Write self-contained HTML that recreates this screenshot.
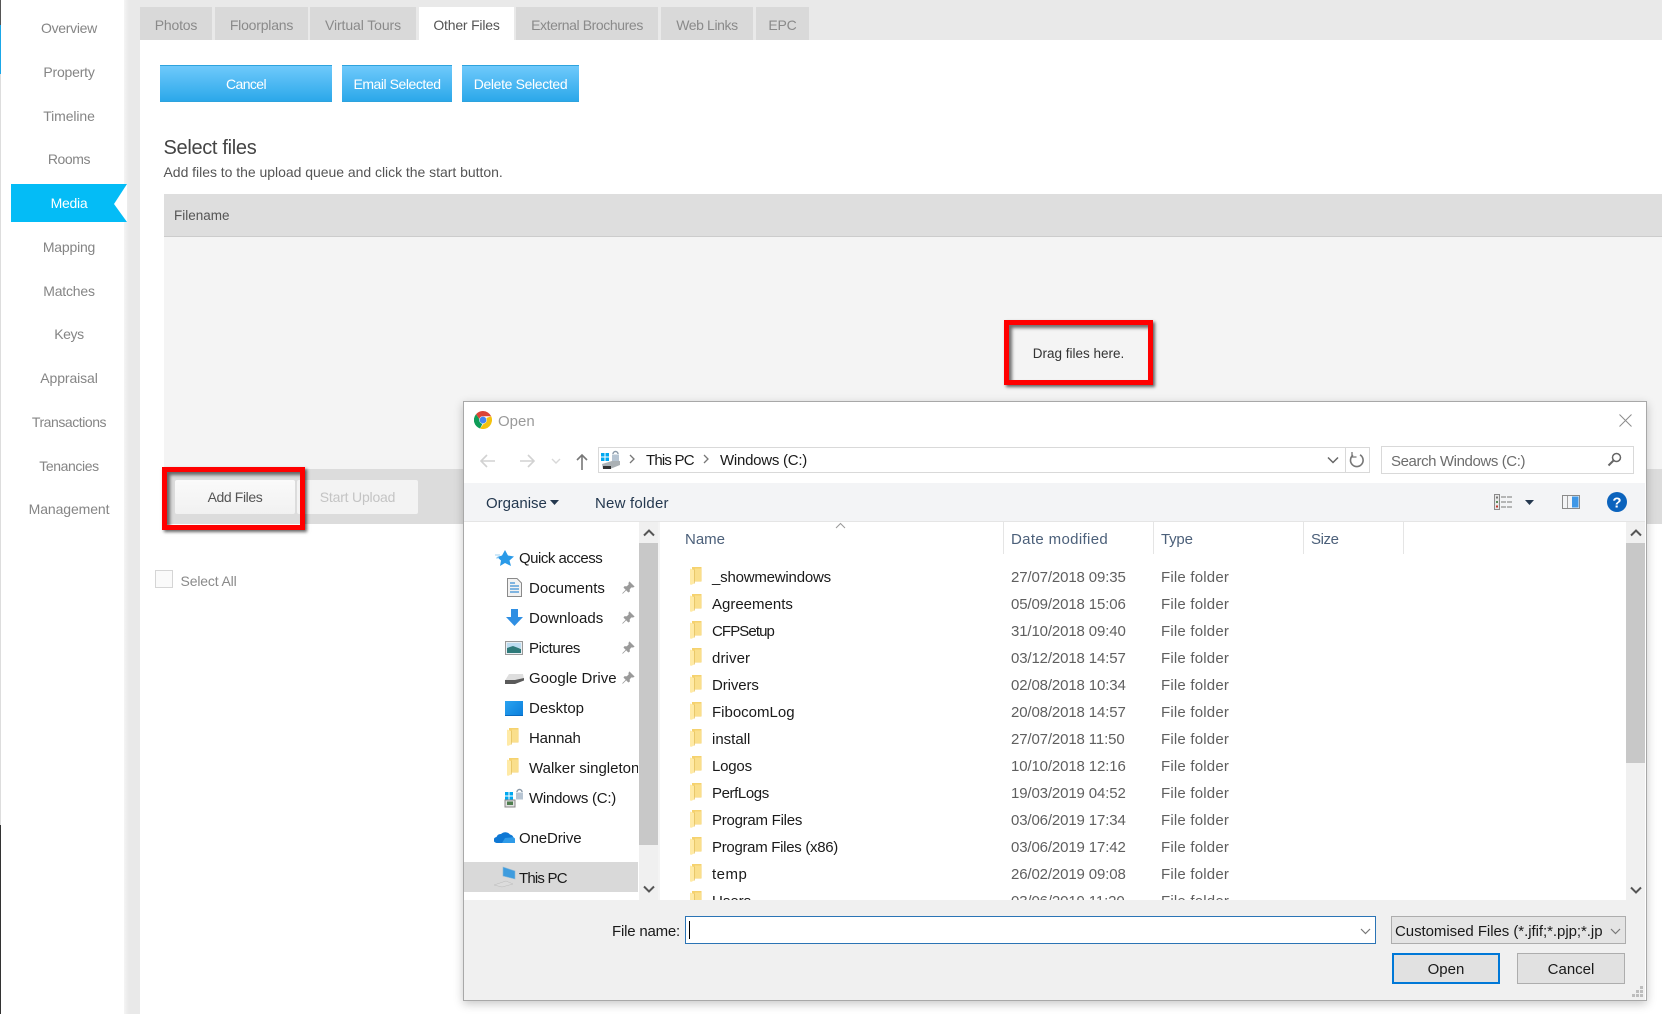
<!DOCTYPE html>
<html><head><meta charset="utf-8"><title>Open</title>
<style>
html,body{margin:0;padding:0;width:1662px;height:1014px;overflow:hidden;background:#fff}
body{position:relative;font-family:"Liberation Sans",sans-serif}
div,svg{position:absolute}
.t{white-space:nowrap;line-height:20px;height:20px}
.n{left:0;width:138px;text-align:center;font-size:14px;color:#858585;letter-spacing:-.2px}
.tab{top:7px;height:33px;background:#d9d9d9;color:#8a8a8a;font-size:14px;line-height:37px;text-align:center;white-space:nowrap;letter-spacing:-.2px}
.btn{top:65px;height:35px;border:solid #2ea3dd;border-width:1px 0;background:linear-gradient(#6fc9fb,#2ba8ea);color:#fff;font-size:14px;line-height:37px;text-align:center;white-space:nowrap;letter-spacing:-.4px}
.red{border:5px solid #f00;box-sizing:border-box;box-shadow:2px 2px 3px rgba(0,0,0,.6),inset 3px 3px 3px rgba(0,0,0,.55)}
.d{font-size:15px;color:#1a1a1a;margin-top:1px}
.h{font-size:15px;color:#4c607a;margin-top:1px}
.g{font-size:15px;color:#5f5f5f;margin-top:1px}
.dt{letter-spacing:-.13px}
.ff{letter-spacing:.2px}
.sep{width:1px;top:522px;height:32px;background:#e5e5e5}
</style></head><body>
<svg width="0" height="0" style="left:0;top:0"><defs>
<symbol id="f" viewBox="0 0 12 18"><path d="M2 0H11.5V14.5H2Z" fill="#f5d26e"/><path d="M5 1.5H11V14H5Z" fill="#fadf8c"/><path d="M4.3 3V16.5" stroke="#e6c569" stroke-width="1"/><path d="M0 1.5L4 3V16.6L.8 18L0 17Z" fill="#ffeaa6"/></symbol>
<symbol id="p" viewBox="0 0 14 14"><path d="M8.5 1 L13 5.5 L11.8 6.2 L10.6 5.8 L8.4 8 L8.4 10.4 L7.4 11 L3 6.6 L3.6 5.6 L6 5.6 L8.2 3.4 L7.8 2.2Z M5 9 L1.5 12.5" fill="#9a9a9a" stroke="#9a9a9a" stroke-width=".8"/></symbol>
</defs></svg>

<!-- left rail -->
<div style="left:0;top:0;width:1px;height:25px;background:#555"></div>
<div style="left:0;top:25px;width:1px;height:49px;background:#1aa7e8"></div>
<div style="left:0;top:74px;width:1px;height:751px;background:#ddd"></div>
<div style="left:0;top:825px;width:1px;height:189px;background:#333"></div>

<!-- gutter -->
<div style="left:124px;top:0;width:16px;height:1014px;background:linear-gradient(90deg,#f4f4f4,#e9e9e9 5px)"></div>
<div style="left:140px;top:0;width:1522px;height:40px;background:#e9e9e9"></div>

<!-- nav -->
<div class="t n" style="top:18px;letter-spacing:-.3px">Overview</div>
<div class="t n" style="top:62px">Property</div>
<div class="t n" style="top:106px;letter-spacing:-.1px">Timeline</div>
<div class="t n" style="top:149px;letter-spacing:-.4px">Rooms</div>
<div style="left:11px;top:184px;width:116px;height:38px;background:#04bcf6"></div>
<svg style="left:113px;top:184px" width="14" height="38"><path d="M14 0 L1 20 L14 38Z" fill="#fff"/></svg>
<div class="t n" style="top:193px;color:#fff;letter-spacing:-.3px">Media</div>
<div class="t n" style="top:237px">Mapping</div>
<div class="t n" style="top:281px">Matches</div>
<div class="t n" style="top:324px;letter-spacing:-.4px">Keys</div>
<div class="t n" style="top:368px;letter-spacing:-.1px">Appraisal</div>
<div class="t n" style="top:412px;letter-spacing:-.45px">Transactions</div>
<div class="t n" style="top:456px;letter-spacing:-.4px">Tenancies</div>
<div class="t n" style="top:499px;letter-spacing:-.1px">Management</div>

<!-- tabs -->
<div class="tab" style="left:140px;width:72px">Photos</div>
<div class="tab" style="left:215px;width:93px">Floorplans</div>
<div class="tab" style="left:310px;width:106px;letter-spacing:-.1px">Virtual Tours</div>
<div class="tab" style="left:419px;width:95px;background:#fff;color:#555">Other Files</div>
<div class="tab" style="left:516px;width:142px;letter-spacing:-.4px">External Brochures</div>
<div class="tab" style="left:661px;width:92px;letter-spacing:-.4px">Web Links</div>
<div class="tab" style="left:756px;width:53px">EPC</div>

<!-- buttons -->
<div class="btn" style="left:160px;width:172px;letter-spacing:-.6px">Cancel</div>
<div class="btn" style="left:342px;width:110px;letter-spacing:-.45px">Email Selected</div>
<div class="btn" style="left:462px;width:117px;letter-spacing:-.35px">Delete Selected</div>

<div class="t" style="left:163.5px;top:137px;font-size:20px;line-height:22px;color:#444;letter-spacing:-.32px">Select files</div>
<div class="t" style="left:163.5px;top:162px;font-size:14px;color:#555;letter-spacing:-.03px">Add files to the upload queue and click the start button.</div>

<!-- uploader -->
<div style="left:164px;top:194px;width:1498px;height:42px;background:#dedede;border-bottom:1px solid #ccc"></div>
<div class="t" style="left:174px;top:206px;font-size:13.5px;color:#555">Filename</div>
<div style="left:164px;top:237px;width:1498px;height:232px;background:#f4f4f4"></div>
<div style="left:164px;top:469px;width:1498px;height:55px;background:#dcdcdc"></div>
<div class="t" style="left:1004px;top:344px;width:149px;text-align:center;font-size:13.5px;color:#333">Drag files here.</div>
<div class="red" style="left:1004px;top:320px;width:149px;height:65px"></div>

<div style="left:175px;top:480px;width:120px;height:34px;background:linear-gradient(#fafafa,#f1f1f1);border-radius:2px"></div>
<div class="t" style="left:175px;top:487px;width:120px;text-align:center;font-size:14px;color:#555;letter-spacing:-.4px">Add Files</div>
<div style="left:297px;top:480px;width:121px;height:34px;background:#f3f3f3;border-radius:2px"></div>
<div class="t" style="left:297px;top:487px;width:121px;text-align:center;font-size:14px;color:#c4c4c4;letter-spacing:-.2px">Start Upload</div>
<div class="red" style="left:162px;top:467px;width:143px;height:63px"></div>

<div style="left:155px;top:570px;width:16px;height:16px;border:1px solid #d5d5d5;background:#fafafa"></div>
<div class="t" style="left:180.5px;top:571px;font-size:14px;color:#8a8a8a;letter-spacing:-.15px">Select All</div>

<!-- dialog -->
<div style="left:463px;top:401px;width:1182px;height:598px;background:#fff;border:1px solid #a8a8a8;box-sizing:content-box;box-shadow:0 3px 9px rgba(0,0,0,.22)"></div>

<!-- title -->
<svg style="left:474px;top:411px" width="18" height="18" viewBox="0 0 18 18"><path d="M9 0A9 9 0 0 1 17.2 5.3H9A3.8 3.8 0 0 0 5.3 8L2 3.2A9 9 0 0 1 9 0Z" fill="#db4437"/><path d="M2 3.2L5.3 8A3.8 3.8 0 0 0 8.5 12.8L6 17.5A9 9 0 0 1 2 3.2Z" fill="#0f9d58"/><path d="M17.2 5.3A9 9 0 0 1 6 17.5L9.6 12.7A3.8 3.8 0 0 0 12.3 7L17.2 5.3Z" fill="#f4c20d"/><circle cx="9" cy="9" r="3.4" fill="#4285f4"/></svg>
<div class="t" style="left:498px;top:412px;font-size:15px;color:#9a9a9a">Open</div>
<svg style="left:1619px;top:414px" width="13" height="13"><path d="M.5 .5L12.5 12.5M12.5 .5L.5 12.5" stroke="#8c8c8c" fill="none"/></svg>

<!-- nav row -->
<svg style="left:479px;top:453px" width="115" height="18" fill="none">
<path d="M16 8H2M8 2L2 8L8 14" stroke="#d2d2d2" stroke-width="1.6"/>
<path d="M41 8H55M49 2L55 8L49 14" stroke="#d2d2d2" stroke-width="1.6"/>
<path d="M73 6L77 10L81 6" stroke="#d8d8d8" stroke-width="1.4"/>
<path d="M103 17V2M98 7L103 2L108 7" stroke="#777" stroke-width="1.6"/>
</svg>
<div style="left:598px;top:447px;width:770px;height:24px;border:1px solid #d9d9d9"></div>
<div style="left:1345px;top:447px;width:1px;height:25px;background:#d9d9d9"></div>
<svg style="left:600px;top:449px" width="22" height="22"><rect x="1" y="4" width="3.5" height="3.5" fill="#00a8f0"/><rect x="5.5" y="4" width="3.5" height="3.5" fill="#00a8f0"/><rect x="1" y="8.5" width="3.5" height="3.5" fill="#00a8f0"/><rect x="5.5" y="8.5" width="3.5" height="3.5" fill="#00a8f0"/><path d="M13 5a2.5 2.5 0 0 1 5 0" stroke="#8a99a8" fill="none" stroke-width="1.4"/><rect x="12" y="5.5" width="7" height="7" fill="#b6c4d2"/><path d="M2 15L12 12H20V16L10 20H3Z" fill="#aab0b4"/><path d="M3 17L11 17V20H3Z" fill="#333"/></svg>
<svg style="left:628px;top:452px" width="120" height="14" fill="none" stroke="#777" stroke-width="1.3"><path d="M2 3L6 7L2 11"/><path d="M76 3L80 7L76 11"/></svg>
<div class="t d" style="left:646px;top:450px;letter-spacing:-.8px">This PC</div>
<div class="t d" style="left:720px;top:450px;letter-spacing:-.25px">Windows (C:)</div>
<svg style="left:1327px;top:456px" width="12" height="8" fill="none"><path d="M1 1.5L6 6.5L11 1.5" stroke="#666" stroke-width="1.5"/></svg>
<svg style="left:1349px;top:452px" width="16" height="16" fill="none"><path d="M4 3.2A6.3 6.3 0 1 0 11 2.8" stroke="#777" stroke-width="1.6"/><path d="M3 0V5H7.5" stroke="#777" stroke-width="1.3"/></svg>
<div style="left:1381px;top:446px;width:251px;height:26px;border:1px solid #d9d9d9"></div>
<div class="t g" style="left:1391px;top:451px;color:#6d6d6d;letter-spacing:-.4px">Search Windows (C:)</div>
<svg style="left:1607px;top:452px" width="15" height="15" fill="none" stroke="#666"><circle cx="9.5" cy="5.5" r="4" stroke-width="1.5"/><path d="M6.5 8.5L1.5 13.5" stroke-width="2"/></svg>

<!-- toolbar -->
<div style="left:464px;top:483px;width:1181px;height:38px;background:#f3f4f6;border-bottom:1px solid #e5e5e5"></div>
<div class="t h" style="left:486px;top:493px;color:#24384f">Organise</div>
<svg style="left:550px;top:500px" width="9" height="5"><path d="M0 0H9L4.5 5Z" fill="#24384f"/></svg>
<div class="t h" style="left:595px;top:493px;color:#24384f;letter-spacing:.2px">New folder</div>
<svg style="left:1494px;top:494px" width="18" height="16" fill="none"><rect x=".5" y=".5" width="5" height="15" fill="#e8e8e8" stroke="#8a8a8a"/><rect x="2" y="2.5" width="2" height="2" fill="#777"/><rect x="2" y="7" width="2" height="2" fill="#5a8a5a"/><rect x="2" y="11.5" width="2" height="2" fill="#c0392b"/><path d="M7 3H18M7 8H18M7 13H18" stroke="#777" stroke-dasharray="5 1"/></svg>
<svg style="left:1525px;top:500px" width="9" height="5"><path d="M0 0H9L4.5 5Z" fill="#24384f"/></svg>
<svg style="left:1562px;top:495px" width="18" height="14"><rect x=".5" y=".5" width="17" height="13" fill="#f3f4f6" stroke="#8a8a8a"/><rect x="10" y="1.5" width="6.5" height="11" fill="#3f97e6"/><rect x="5" y="1" width="1" height="12" fill="#a0a0a0"/></svg>
<svg style="left:1607px;top:492px" width="20" height="20"><circle cx="10" cy="10" r="10" fill="#0b63bd"/><text x="10" y="15.5" text-anchor="middle" font-family="Liberation Sans" font-weight="bold" font-size="15" fill="#fff">?</text></svg>

<!-- nav pane -->
<div style="left:464px;top:862px;width:174px;height:30px;background:#d9d9d9"></div>
<div style="left:639px;top:522px;width:19px;height:378px;background:#f0f0f0"></div>
<div style="left:639px;top:543px;width:19px;height:302px;background:#c8c8c8"></div>
<svg style="left:643px;top:529px" width="12" height="8" fill="none"><path d="M1 6.5L6 1.5L11 6.5" stroke="#555" stroke-width="2"/></svg>
<svg style="left:643px;top:885px" width="12" height="8" fill="none"><path d="M1 1.5L6 6.5L11 1.5" stroke="#555" stroke-width="2"/></svg>
<div style="left:658px;top:522px;width:2px;height:378px;background:#f4f4f4"></div>

<svg style="left:495px;top:549px" width="20" height="18"><path d="M10 1L13 6.5L19 7.5L14.5 11.5L16 17L10 14L5 17L6 11.5L2 8L7 6.5Z" fill="#2a9ae8"/><path d="M0 6H5M1 9H4" stroke="#9cd0f2"/></svg>
<div class="t d" style="left:519px;top:548px;letter-spacing:-.5px">Quick access</div>
<svg style="left:507px;top:578px" width="15" height="19"><path d="M.5 .5H10L14.5 5V18.5H.5Z" fill="#f2f2f2" stroke="#8a8a8a"/><path d="M3 5H8M3 8H12M3 11H12M3 14H12" stroke="#3b8fd6" stroke-width="1.2"/></svg>
<div class="t d" style="left:529px;top:578px">Documents</div>
<svg style="left:506px;top:609px" width="17" height="17"><path d="M5 0H12V8H17L8.5 17L0 8H5Z" fill="#2f8fe3"/></svg>
<div class="t d" style="left:529px;top:608px">Downloads</div>
<svg style="left:505px;top:641px" width="18" height="14"><rect x=".5" y=".5" width="17" height="13" fill="#e8eef2" stroke="#999"/><rect x="2" y="2" width="14" height="5" fill="#bcdcf0"/><path d="M2 7L8 5L16 8V12H2Z" fill="#2e7a7a"/></svg>
<div class="t d" style="left:529px;top:638px;letter-spacing:-.4px">Pictures</div>
<svg style="left:505px;top:672px" width="19" height="13"><path d="M4 2H18L19 7L10 8.5H0Z" fill="#dedede"/><path d="M0 8H10L19 6V8.5L10 12H0Z" fill="#5a5a5a"/></svg>
<div class="t d" style="left:529px;top:668px">Google Drive</div>
<div style="left:505px;top:701px;width:18px;height:14px;background:linear-gradient(135deg,#2aa3f0,#0c7fdc);border-bottom:1px solid #0a6ac0"></div>
<div class="t d" style="left:529px;top:698px">Desktop</div>
<svg style="left:507px;top:728px" width="12" height="18"><use href="#f"/></svg>
<div class="t d" style="left:529px;top:728px;letter-spacing:-.15px">Hannah</div>
<svg style="left:507px;top:758px" width="12" height="18"><use href="#f"/></svg>
<div class="t d" style="left:529px;top:758px;width:109px;overflow:hidden">Walker singleton</div>
<svg style="left:504px;top:787px" width="20" height="21"><rect x="1" y="5" width="3.5" height="3.5" fill="#00a8f0"/><rect x="5.5" y="5" width="3.5" height="3.5" fill="#00a8f0"/><rect x="1" y="9.5" width="3.5" height="3" fill="#00a8f0"/><rect x="5.5" y="9.5" width="3.5" height="3" fill="#00a8f0"/><path d="M13 5a2.5 2.5 0 0 1 5 0" stroke="#8a99a8" fill="none" stroke-width="1.4"/><rect x="12" y="5.5" width="7" height="7" fill="#b6c4d2"/><rect x="1" y="13" width="10" height="7" fill="#e2e2e2" stroke="#888"/><rect x="3" y="14.5" width="6" height="3.5" fill="#4f7d4f"/></svg>
<div class="t d" style="left:529px;top:788px;letter-spacing:-.25px">Windows (C:)</div>
<svg style="left:494px;top:829px" width="21" height="15"><path d="M3 14A3 3 0 0 1 2.5 8A4.5 4.5 0 0 1 7 5A6 6 0 0 1 16 5.5A4.5 4.5 0 0 1 17 14Z" fill="#0f78d4"/><path d="M8 14L21 14A3.5 3.5 0 0 0 17 8.5L11 9Z" fill="#2f9be8"/></svg>
<div class="t d" style="left:519px;top:828px;letter-spacing:-.1px">OneDrive</div>
<svg style="left:494px;top:866px" width="22" height="22"><path d="M9 1L21 5V13L9 10Z" fill="#3e9cde" stroke="#8ab8d8" stroke-width=".6"/><path d="M0 19L12 15L19 18L8 21Z" fill="#dcdcdc" stroke="#bbb" stroke-width=".5"/></svg>
<div class="t d" style="left:519px;top:868px;letter-spacing:-.8px">This PC</div>

<!-- pins -->
<svg style="left:621px;top:581px" width="14" height="14"><use href="#p"/></svg>
<svg style="left:621px;top:611px" width="14" height="14"><use href="#p"/></svg>
<svg style="left:621px;top:641px" width="14" height="14"><use href="#p"/></svg>
<svg style="left:621px;top:671px" width="14" height="14"><use href="#p"/></svg>

<!-- file list header -->
<div class="t h" style="left:685px;top:529px">Name</div>
<svg style="left:835px;top:522px" width="11" height="7" fill="none"><path d="M1 6L5.5 1.5L10 6" stroke="#999"/></svg>
<div class="sep" style="left:1003px"></div>
<div class="t h" style="left:1011px;top:529px;letter-spacing:.35px">Date modified</div>
<div class="sep" style="left:1153px"></div>
<div class="t h" style="left:1161px;top:529px;letter-spacing:-.2px">Type</div>
<div class="sep" style="left:1303px"></div>
<div class="t h" style="left:1311px;top:529px;letter-spacing:-.4px">Size</div>
<div class="sep" style="left:1403px"></div>

<!-- files -->
<svg style="left:690px;top:567px" width="12" height="18"><use href="#f"/></svg><div class="t d" style="left:712px;top:567px;letter-spacing:-.2px">_showmewindows</div><div class="t g dt" style="left:1011px;top:567px">27/07/2018 09:35</div><div class="t g ff" style="left:1161px;top:567px">File folder</div>
<svg style="left:690px;top:594px" width="12" height="18"><use href="#f"/></svg><div class="t d" style="left:712px;top:594px">Agreements</div><div class="t g dt" style="left:1011px;top:594px">05/09/2018 15:06</div><div class="t g ff" style="left:1161px;top:594px">File folder</div>
<svg style="left:690px;top:621px" width="12" height="18"><use href="#f"/></svg><div class="t d" style="left:712px;top:621px;letter-spacing:-.9px">CFPSetup</div><div class="t g dt" style="left:1011px;top:621px">31/10/2018 09:40</div><div class="t g ff" style="left:1161px;top:621px">File folder</div>
<svg style="left:690px;top:648px" width="12" height="18"><use href="#f"/></svg><div class="t d" style="left:712px;top:648px;letter-spacing:.1px">driver</div><div class="t g dt" style="left:1011px;top:648px">03/12/2018 14:57</div><div class="t g ff" style="left:1161px;top:648px">File folder</div>
<svg style="left:690px;top:675px" width="12" height="18"><use href="#f"/></svg><div class="t d" style="left:712px;top:675px;letter-spacing:-.1px">Drivers</div><div class="t g dt" style="left:1011px;top:675px">02/08/2018 10:34</div><div class="t g ff" style="left:1161px;top:675px">File folder</div>
<svg style="left:690px;top:702px" width="12" height="18"><use href="#f"/></svg><div class="t d" style="left:712px;top:702px">FibocomLog</div><div class="t g dt" style="left:1011px;top:702px">20/08/2018 14:57</div><div class="t g ff" style="left:1161px;top:702px">File folder</div>
<svg style="left:690px;top:729px" width="12" height="18"><use href="#f"/></svg><div class="t d" style="left:712px;top:729px">install</div><div class="t g dt" style="left:1011px;top:729px">27/07/2018 11:50</div><div class="t g ff" style="left:1161px;top:729px">File folder</div>
<svg style="left:690px;top:756px" width="12" height="18"><use href="#f"/></svg><div class="t d" style="left:712px;top:756px;letter-spacing:-.2px">Logos</div><div class="t g dt" style="left:1011px;top:756px">10/10/2018 12:16</div><div class="t g ff" style="left:1161px;top:756px">File folder</div>
<svg style="left:690px;top:783px" width="12" height="18"><use href="#f"/></svg><div class="t d" style="left:712px;top:783px;letter-spacing:-.4px">PerfLogs</div><div class="t g dt" style="left:1011px;top:783px">19/03/2019 04:52</div><div class="t g ff" style="left:1161px;top:783px">File folder</div>
<svg style="left:690px;top:810px" width="12" height="18"><use href="#f"/></svg><div class="t d" style="left:712px;top:810px;letter-spacing:-.25px">Program Files</div><div class="t g dt" style="left:1011px;top:810px">03/06/2019 17:34</div><div class="t g ff" style="left:1161px;top:810px">File folder</div>
<svg style="left:690px;top:837px" width="12" height="18"><use href="#f"/></svg><div class="t d" style="left:712px;top:837px;letter-spacing:-.3px">Program Files (x86)</div><div class="t g dt" style="left:1011px;top:837px">03/06/2019 17:42</div><div class="t g ff" style="left:1161px;top:837px">File folder</div>
<svg style="left:690px;top:864px" width="12" height="18"><use href="#f"/></svg><div class="t d" style="left:712px;top:864px;letter-spacing:.5px">temp</div><div class="t g dt" style="left:1011px;top:864px">26/02/2019 09:08</div><div class="t g ff" style="left:1161px;top:864px">File folder</div>
<svg style="left:690px;top:891px" width="12" height="18"><use href="#f"/></svg><div class="t d" style="left:712px;top:891px">Users</div><div class="t g dt" style="left:1011px;top:891px">03/06/2019 11:20</div><div class="t g ff" style="left:1161px;top:891px">File folder</div>

<!-- right scrollbar -->
<div style="left:1626px;top:522px;width:19px;height:378px;background:#f0f0f0"></div>
<div style="left:1626px;top:543px;width:19px;height:220px;background:#c8c8c8"></div>
<svg style="left:1630px;top:529px" width="12" height="8" fill="none"><path d="M1 6.5L6 1.5L11 6.5" stroke="#555" stroke-width="2"/></svg>
<svg style="left:1630px;top:886px" width="12" height="8" fill="none"><path d="M1 1.5L6 6.5L11 1.5" stroke="#555" stroke-width="2"/></svg>

<!-- bottom bar -->
<div style="left:464px;top:900px;width:1181px;height:100px;background:#f0f0f0"></div>
<div class="t d" style="left:612px;top:921px;letter-spacing:-.2px">File name:</div>
<div style="left:685px;top:916px;width:689px;height:26px;background:#fff;border:1px solid #2b74b5"></div>
<div style="left:689px;top:921px;width:1px;height:18px;background:#000"></div>
<svg style="left:1360px;top:928px" width="11" height="7" fill="none"><path d="M1 1L5.5 5.5L10 1" stroke="#777" stroke-width="1.2"/></svg>
<div style="left:1391px;top:916px;width:233px;height:26px;background:#e4e4e4;border:1px solid #adadad"></div>
<div class="t d" style="left:1395px;top:921px;width:207px;overflow:hidden;letter-spacing:-.05px">Customised Files (*.jfif;*.pjp;*.jpg;*.jpeg)</div>
<svg style="left:1610px;top:928px" width="11" height="7" fill="none"><path d="M1 1L5.5 5.5L10 1" stroke="#777" stroke-width="1.2"/></svg>
<div style="left:1392px;top:953px;width:104px;height:27px;background:#e1e1e1;border:2px solid #0078d7"></div>
<div class="t d" style="left:1392px;top:959px;width:108px;text-align:center">Open</div>
<div style="left:1517px;top:953px;width:106px;height:29px;background:#e1e1e1;border:1px solid #adadad"></div>
<div class="t d" style="left:1517px;top:959px;width:108px;text-align:center">Cancel</div>
<svg style="left:1632px;top:986px" width="12" height="12" fill="#bdbdbd"><rect x="8" y="0" width="3" height="3"/><rect x="4" y="4" width="3" height="3"/><rect x="8" y="4" width="3" height="3"/><rect x="0" y="8" width="3" height="3"/><rect x="4" y="8" width="3" height="3"/><rect x="8" y="8" width="3" height="3"/></svg>
</body></html>
